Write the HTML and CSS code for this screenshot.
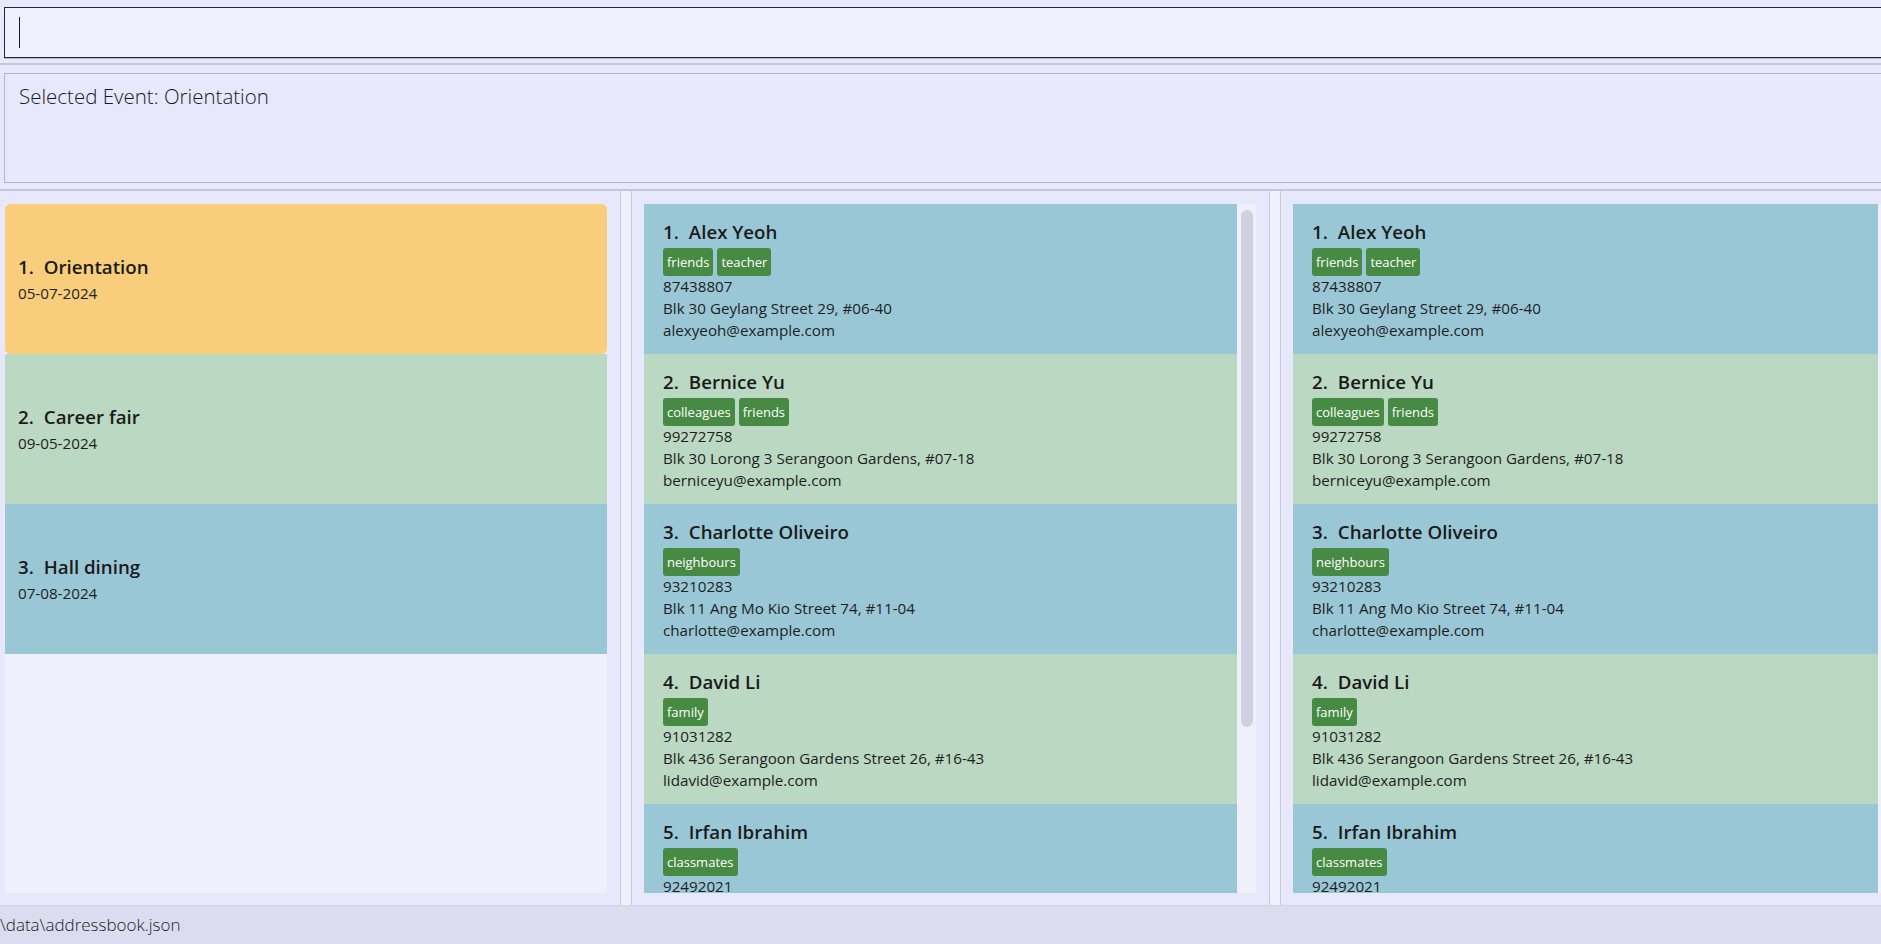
FILE: index.html
```html
<!DOCTYPE html>
<html lang="en">
<head>
<meta charset="utf-8">
<title>Address Book</title>
<link rel="stylesheet" href="styles.css">
</head>
<body>
<div class="app">
  <div class="command-pane">
    <div class="command-box"><span class="caret"></span></div>
  </div>
  <div class="hsep"></div>
  <div class="result-pane">
    <div class="result-box">Selected Event: Orientation</div>
  </div>
  <div class="hsep"></div>
  <div class="main">
    <section class="panel panel-events">
      <div class="list">
        <div class="cards">
          <div class="ecard orange selected">
            <div class="title"><span class="id">1.</span><span>Orientation</span></div>
            <div class="small">05-07-2024</div>
          </div>
          <div class="ecard green">
            <div class="title"><span class="id">2.</span><span>Career fair</span></div>
            <div class="small">09-05-2024</div>
          </div>
          <div class="ecard blue">
            <div class="title"><span class="id">3.</span><span>Hall dining</span></div>
            <div class="small">07-08-2024</div>
          </div>
        </div>
      </div>
    </section>
    <div class="vsep"></div>
    <section class="panel panel-persons">
      <div class="list">
        <div class="cards">
          <div class="pcard blue">
            <div class="title"><span class="id">1.</span><span>Alex Yeoh</span></div>
            <div class="tags"><span class="tag">friends</span><span class="tag">teacher</span></div>
            <div class="small">87438807</div>
            <div class="small">Blk 30 Geylang Street 29, #06-40</div>
            <div class="small">alexyeoh@example.com</div>
          </div>
          <div class="pcard green">
            <div class="title"><span class="id">2.</span><span>Bernice Yu</span></div>
            <div class="tags"><span class="tag">colleagues</span><span class="tag">friends</span></div>
            <div class="small">99272758</div>
            <div class="small">Blk 30 Lorong 3 Serangoon Gardens, #07-18</div>
            <div class="small">berniceyu@example.com</div>
          </div>
          <div class="pcard blue">
            <div class="title"><span class="id">3.</span><span>Charlotte Oliveiro</span></div>
            <div class="tags"><span class="tag">neighbours</span></div>
            <div class="small">93210283</div>
            <div class="small">Blk 11 Ang Mo Kio Street 74, #11-04</div>
            <div class="small">charlotte@example.com</div>
          </div>
          <div class="pcard green">
            <div class="title"><span class="id">4.</span><span>David Li</span></div>
            <div class="tags"><span class="tag">family</span></div>
            <div class="small">91031282</div>
            <div class="small">Blk 436 Serangoon Gardens Street 26, #16-43</div>
            <div class="small">lidavid@example.com</div>
          </div>
          <div class="pcard blue">
            <div class="title"><span class="id">5.</span><span>Irfan Ibrahim</span></div>
            <div class="tags"><span class="tag">classmates</span></div>
            <div class="small">92492021</div>
            <div class="small">Blk 47 Tampines Street 20, #17-35</div>
            <div class="small">irfan@example.com</div>
          </div>
        </div>
        <div class="track"><div class="thumb"></div></div>
      </div>
    </section>
    <div class="vsep"></div>
    <section class="panel panel-persons2">
      <div class="list">
        <div class="cards">
          <div class="pcard blue">
            <div class="title"><span class="id">1.</span><span>Alex Yeoh</span></div>
            <div class="tags"><span class="tag">friends</span><span class="tag">teacher</span></div>
            <div class="small">87438807</div>
            <div class="small">Blk 30 Geylang Street 29, #06-40</div>
            <div class="small">alexyeoh@example.com</div>
          </div>
          <div class="pcard green">
            <div class="title"><span class="id">2.</span><span>Bernice Yu</span></div>
            <div class="tags"><span class="tag">colleagues</span><span class="tag">friends</span></div>
            <div class="small">99272758</div>
            <div class="small">Blk 30 Lorong 3 Serangoon Gardens, #07-18</div>
            <div class="small">berniceyu@example.com</div>
          </div>
          <div class="pcard blue">
            <div class="title"><span class="id">3.</span><span>Charlotte Oliveiro</span></div>
            <div class="tags"><span class="tag">neighbours</span></div>
            <div class="small">93210283</div>
            <div class="small">Blk 11 Ang Mo Kio Street 74, #11-04</div>
            <div class="small">charlotte@example.com</div>
          </div>
          <div class="pcard green">
            <div class="title"><span class="id">4.</span><span>David Li</span></div>
            <div class="tags"><span class="tag">family</span></div>
            <div class="small">91031282</div>
            <div class="small">Blk 436 Serangoon Gardens Street 26, #16-43</div>
            <div class="small">lidavid@example.com</div>
          </div>
          <div class="pcard blue">
            <div class="title"><span class="id">5.</span><span>Irfan Ibrahim</span></div>
            <div class="tags"><span class="tag">classmates</span></div>
            <div class="small">92492021</div>
            <div class="small">Blk 47 Tampines Street 20, #17-35</div>
            <div class="small">irfan@example.com</div>
          </div>
        </div>
        <div class="track track-empty"></div>
      </div>
    </section>
  </div>
  <div class="bottom-sep"></div>
  <div class="status-bar">\data\addressbook.json</div>
</div>
</body>
</html>
```
FILE: styles.css
```css
* { box-sizing: border-box; }

html, body {
  margin: 0;
  padding: 0;
  width: 1881px;
  height: 944px;
  overflow: hidden;
  background: #e8e8fc;
  font-family: "Open Sans", "Noto Sans", sans-serif;
  color: #1c1c1c;
}

.app {
  display: flex;
  flex-direction: column;
  width: 1881px;
  height: 944px;
  overflow: hidden;
}

.command-pane {
  height: 63px;
  padding: 7px 0 0 4px;
  flex: none;
}

.command-box {
  height: 51px;
  margin-right: -20px;
  background: #f0f0fe;
  border: 1px solid #23283a;
  border-right: none;
  box-shadow: 0 1px 0 #b8b8c8;
  padding: 9px 0 0 14px;
}

.caret {
  display: block;
  width: 1px;
  height: 31px;
  background: #1e1e1e;
}

.hsep {
  flex: none;
  height: 2px;
  background: #c6c6d6;
}

.result-pane {
  flex: none;
  height: 124px;
  padding: 8px 0 0 4px;
}

.result-box {
  height: 110px;
  margin-right: -20px;
  background: #e8e8fc;
  border: 1px solid #b6b6c6;
  border-right: none;
  padding: 8px 0 0 14px;
  font-weight: 300;
  font-size: 20.5px;
  color: #1a1a1a;
}

.main {
  flex: none;
  height: 714px;
  display: flex;
  overflow: hidden;
}

.panel {
  flex: none;
  height: 714px;
  padding: 13px 13px 12px 12px;
  display: flex;
}

.panel-events { width: 620px; padding-left: 5px; }
.panel-persons { width: 637px; }
.panel-persons2 { width: 629px; }

.vsep {
  flex: none;
  width: 12px;
  background: #f0f0fe;
  border-left: 1px solid #c8c8d8;
  border-right: 1px solid #c8c8d8;
}

.list {
  flex: 1;
  display: flex;
  background: #f0f0fc;
  overflow: hidden;
}

.cards {
  flex: 1;
  display: flex;
  flex-direction: column;
  overflow: hidden;
}

.track {
  flex: none;
  width: 19px;
  padding: 6px 3px 0 4px;
  background: #f0f0fc;
}

.thumb {
  height: 517px;
  border-radius: 6px;
  background: #d0d0e2;
}

.orange { background: #f8ce7c; }
.green  { background: #bad8c2; }
.blue   { background: #9ac7d6; }

.ecard {
  flex: none;
  height: 150px;
  padding-left: 13px;
  display: flex;
  flex-direction: column;
  justify-content: center;
  gap: 2px;
}

.ecard.selected { border-radius: 5px; }

.title {
  display: flex;
  gap: 10px;
  font-size: 18.7px;
  font-weight: 600;
  line-height: 26px;
  color: #1a1a1a;
  white-space: nowrap;
}

.small {
  font-size: 15.2px;
  line-height: 22px;
  color: #1e1e1e;
  white-space: nowrap;
}

.pcard {
  flex: none;
  height: 150px;
  padding: 15px 0 0 19px;
  overflow: hidden;
}

.tags {
  display: flex;
  gap: 4px;
  margin-top: 3px;
  margin-bottom: -1px;
  height: 28px;
}

.tag {
  display: block;
  height: 28px;
  line-height: 28px;
  padding: 0 4px;
  font-size: 13px;
  color: #ffffff;
  background: #468a43;
  border-radius: 3px;
}

.bottom-sep {
  flex: none;
  height: 1px;
  background: #d2d2e4;
}

.status-bar {
  flex: 1;
  background: #dcdcf0;
  font-size: 17px;
  font-weight: 300;
  line-height: 38px;
  color: #222222;
  white-space: nowrap;
}
```
